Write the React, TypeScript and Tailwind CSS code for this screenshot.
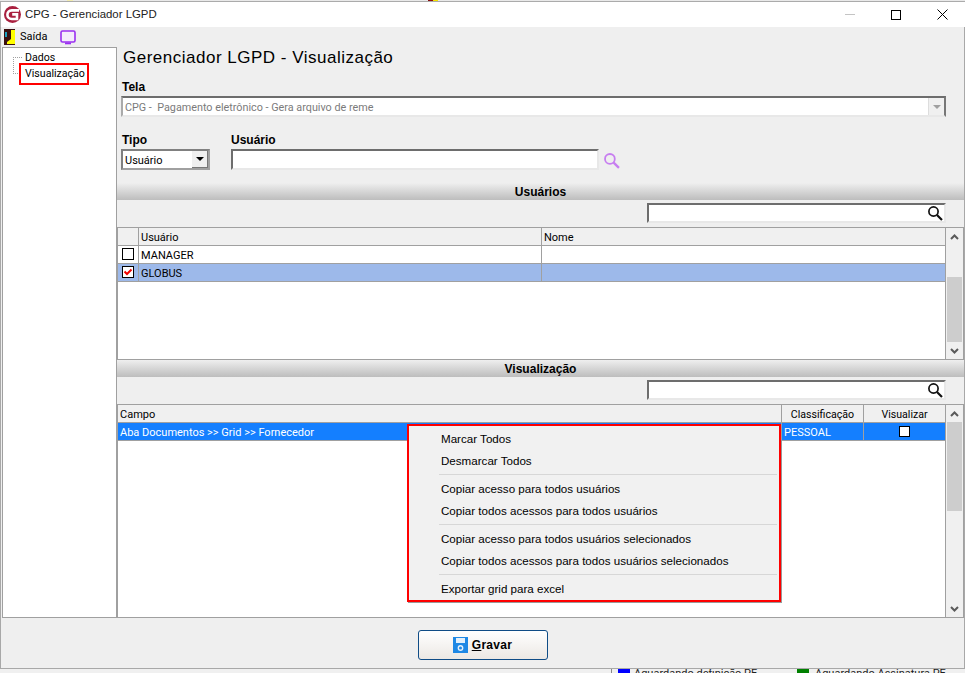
import React from "react";

const FONT = '"Liberation Sans", Arial, sans-serif';
const GRID = '"Roboto", "Liberation Sans", sans-serif';
const inset = "border-t-2 border-l-2 border-t-[#6d6d6d] border-l-[#6d6d6d] border-b-2 border-r-2 border-b-[#e8e8e8] border-r-[#e8e8e8]";

function Lens({ color = "#111", size = 16 }: { color?: string; size?: number }) {
  return (
    <svg width={size} height={size} viewBox="0 0 16 16" fill="none">
      <circle cx="6.5" cy="6.5" r="4.6" stroke={color} strokeWidth="1.7" />
      <path d="M10 10l5 5" stroke={color} strokeWidth="2.2" />
    </svg>
  );
}

function ScrollBar({ thumbTop, thumbH }: { thumbTop: number; thumbH: number }) {
  return (
    <div className="w-[18px] shrink-0 bg-[#f0f0f0] border-l border-[#a0a0a0] flex flex-col">
      <div className="h-[17px] flex items-center justify-center shrink-0">
        <svg width="9" height="6" viewBox="0 0 9 6"><path d="M1 5l3.5-3.5L8 5" stroke="#5a5a5a" strokeWidth="2" fill="none" /></svg>
      </div>
      <div className="flex-1 min-h-0 mx-[1px]">
        <div style={{ marginTop: thumbTop, height: thumbH }} className="bg-[#cdcdcd]" />
      </div>
      <div className="h-[17px] flex items-center justify-center shrink-0">
        <svg width="9" height="6" viewBox="0 0 9 6"><path d="M1 1l3.5 3.5L8 1" stroke="#5a5a5a" strokeWidth="2" fill="none" /></svg>
      </div>
    </div>
  );
}

function SectionBar({ label }: { label: string }) {
  return (
    <div className="h-[17px] flex items-center justify-center bg-gradient-to-b from-[#efefef] to-[#bdbdbd] text-[12px] font-bold text-black leading-none shrink-0">
      {label}
    </div>
  );
}

function SearchRow() {
  return (
    <div className="h-[20px] mt-[3px] flex justify-end pr-[18px] shrink-0">
      <div className={`w-[299px] h-[20px] bg-white ${inset} flex items-center justify-end pr-[1px]`}>
        <Lens />
      </div>
    </div>
  );
}

function MenuItem({ label }: { label: string }) {
  return <div className="h-[22px] pl-[32px] flex items-center text-[11.6px] text-black whitespace-nowrap">{label}</div>;
}

function MenuSep() {
  return <div className="h-[1px] mt-[2px] mb-[3px] ml-[30px] mr-[2px] bg-[#d7d7d7]" />;
}

export default function App() {
  return (
    <div className="w-[965px] h-[673px] relative overflow-hidden bg-[#f0f0f0] flex flex-col" style={{ fontFamily: FONT }}>
      <div className="h-[1px] bg-[#e9e9e9] shrink-0 flex">
        <div className="ml-[67px] w-[6px] bg-[#f2ecb0]" />
        <div className="ml-[355px] w-[5px] bg-[#8a1010]" />
        <div className="w-[5px] bg-[#f4e400]" />
      </div>
      <div className="h-[1px] bg-[#ababab] shrink-0" />
      <div className="h-[25px] bg-white shrink-0 flex items-center pl-[3px] text-[11.4px] text-[#222] border-l border-[#b0b0b0]">
        <svg width="17" height="17" viewBox="0 0 17 17" className="mr-[4px]">
          <circle cx="8.5" cy="8.5" r="8.5" fill="#a9203f" />
          <path d="M15 4.4H7.8C5 4.4 3.4 6.4 3.4 8.7S5 13 7.8 13H13V8.4H8.2" stroke="#fff" strokeWidth="2.6" fill="none" />
        </svg>
        <span>CPG - Gerenciador LGPD</span>
        <div className="ml-auto flex items-center">
          <div className="w-[46px] flex justify-center"><div className="w-[10px] h-[1px] bg-[#c4c4c4]" /></div>
          <div className="w-[46px] flex justify-center"><div className="w-[10px] h-[10px] border border-black" /></div>
          <div className="w-[46px] flex justify-center">
            <svg width="11" height="11" viewBox="0 0 11 11"><path d="M0.5 0.5l10 10M10.5 0.5l-10 10" stroke="#000" strokeWidth="1" /></svg>
          </div>
        </div>
      </div>

      <div className="h-[642px] shrink-0 bg-[#efefef] flex flex-col border-l border-r border-b border-[#a8a8a8]">
        <div className="h-[20px] flex items-center shrink-0 text-[11px] text-black pl-[3px]" style={{ fontFamily: GRID }}>
          <svg width="11" height="16" viewBox="0 0 11 16" className="mr-[5px]">
            <rect width="11" height="16" fill="#3a1010" />
            <rect x="3" y="1" width="8" height="14" fill="#ffff00" />
            <path d="M3 1h4v9l-4 3z" fill="#3a1010" />
            <rect x="1" y="3" width="2" height="5" fill="#19a0c0" />
          </svg>
          <span className="w-[40px]">Saída</span>
          <svg width="16" height="15" viewBox="0 0 16 15">
            <rect x="1" y="1" width="14" height="11" rx="1.5" fill="#f4ecfb" stroke="#9a2ff0" strokeWidth="1.6" />
            <rect x="5" y="12.5" width="6" height="1.8" fill="#9a2ff0" />
          </svg>
        </div>

        <div className="h-[571px] shrink-0 flex">
          <div className="w-[115px] ml-[1px] bg-white border border-[#a0a0a0] shrink-0 relative text-[10.6px] text-black" style={{ fontFamily: GRID }}>
            <div className="absolute left-[10px] top-[9px] h-[17px] border-l border-dotted border-[#a0a0a0]" />
            <div className="absolute left-[10px] top-[9px] w-[9px] border-t border-dotted border-[#a0a0a0]" />
            <div className="absolute left-[10px] top-[25px] w-[7px] border-t border-dotted border-[#a0a0a0]" />
            <div className="absolute left-[22px] top-[3px] leading-[14px]">Dados</div>
            <div className="absolute left-[22px] top-[19px] leading-[14px]">Visualização</div>
            <div className="absolute left-[16px] top-[15px] w-[70px] h-[22px] border-[2px] border-[#ff0000]" />
          </div>

          <div className="flex-1 min-w-0 flex flex-col">
            <div className="h-[21px] pl-[6px] flex items-center text-[17px] text-black tracking-[0.5px] shrink-0">
              Gerenciador LGPD - Visualização
            </div>
            <div className="h-[14px] mt-[12px] pl-[5px] text-[12px] font-bold text-black leading-[14px] shrink-0">Tela</div>
            <div className="ml-[4px] mr-[18px] mt-[2px] h-[21px] bg-white border-t-2 border-l-2 border-t-[#6d6d6d] border-l-[#aaa] border-b-2 border-r-2 border-b-[#e8e8e8] border-r-[#777] flex items-center shrink-0">
              <span className="pl-[2px] pt-[3px] text-[10.8px] text-[#7b7b7b] whitespace-pre" style={{ fontFamily: GRID }}>CPG -  Pagamento eletrônico - Gera arquivo de reme</span>
              <div className="ml-auto w-[16px] h-full bg-[#f0f0f0] border-l border-[#ddd] flex items-center justify-center">
                <svg width="8" height="4" viewBox="0 0 8 4"><path d="M0 0h8L4 4z" fill="#a0a0a0" /></svg>
              </div>
            </div>
            <div className="flex h-[14px] mt-[16px] pl-[5px] shrink-0 text-[12px] font-bold text-black leading-[14px]">
              <div className="w-[109px]">Tipo</div>
              <div>Usuário</div>
            </div>
            <div className="flex mt-[2px] pl-[4px] items-center shrink-0 h-[21px]">
              <div className="w-[89px] h-[21px] bg-white border-t-2 border-l-2 border-t-[#808080] border-l-[#808080] border-b-2 border-r-2 border-b-[#a0a0a0] border-r-[#a0a0a0] flex items-center text-[11px] text-black" style={{ fontFamily: GRID }}>
                <span className="pl-[2px] pt-[3px]">Usuário</span>
                <div className="ml-auto w-[16px] h-[17px] bg-[#efefef] border-r border-b border-[#777] flex items-center justify-center">
                  <svg width="8" height="4" viewBox="0 0 8 4"><path d="M0 0h8L4 4z" fill="#000" /></svg>
                </div>
              </div>
              <div className={`ml-[21px] w-[368px] h-[21px] bg-white ${inset}`} />
              <div className="ml-[4px] mt-[1px]"><Lens color="#c77ef0" size={17} /></div>
            </div>

            <div className="h-[13px] shrink-0" />
            <SectionBar label="Usuários" />
            <SearchRow />
            <div className="h-[133px] mt-[4px] border border-[#a0a0a0] bg-white flex shrink-0 overflow-hidden" style={{ fontFamily: GRID }}>
              <div className="w-[827px] shrink-0 flex flex-col text-[11px] text-black">
                <div className="h-[18px] flex bg-[#f0f0f0] border-b border-[#a0a0a0]">
                  <div className="w-[21px] border-r border-[#a0a0a0]" />
                  <div className="w-[403px] pl-[2px] border-r border-[#a0a0a0] leading-[19px]">Usuário</div>
                  <div className="pl-[2px] leading-[19px]">Nome</div>
                </div>
                <div className="h-[18px] flex border-b border-[#a0a0a0]">
                  <div className="w-[21px] border-r border-[#a0a0a0] pl-[4px] pt-[2px]"><div className="w-[12px] h-[12px] border border-black bg-white" /></div>
                  <div className="w-[403px] pl-[2px] border-r border-[#a0a0a0] leading-[19px]">MANAGER</div>
                </div>
                <div className="h-[18px] flex border-b border-[#a0a0a0] bg-[#9db9ea]">
                  <div className="w-[21px] border-r border-[#a0a0a0] pl-[4px] pt-[2px]">
                    <div className="w-[12px] h-[12px] border border-black bg-white flex items-center justify-center">
                      <svg width="10" height="10" viewBox="0 0 10 10"><path d="M1.5 4.5l2.5 2.5L8.5 2.5" stroke="#f00000" strokeWidth="2" fill="none" /></svg>
                    </div>
                  </div>
                  <div className="w-[403px] pl-[2px] border-r border-[#a0a0a0] leading-[19px]">GLOBUS</div>
                </div>
              </div>
              <ScrollBar thumbTop={32} thumbH={65} />
            </div>

            <SectionBar label="Visualização" />
            <SearchRow />
            <div className="h-[214px] mt-[4px] border border-[#a0a0a0] bg-white flex relative shrink-0" style={{ fontFamily: GRID }}>
              <div className="w-[827px] shrink-0 flex flex-col text-[11px] text-black">
                <div className="h-[18px] flex bg-[#f0f0f0] border-b border-[#a0a0a0]">
                  <div className="w-[664px] pl-[2px] border-r border-[#a0a0a0] leading-[19px]">Campo</div>
                  <div className="w-[82px] border-r border-[#a0a0a0] leading-[19px] text-center text-[10.6px]">Classificação</div>
                  <div className="flex-1 leading-[19px] text-center text-[10.6px]">Visualizar</div>
                </div>
                <div className="h-[18px] flex border-b border-[#a0a0a0] bg-[#147fff] text-white">
                  <div className="w-[664px] pl-[2px] border-r border-[#a0a0a0] leading-[19px]">Aba Documentos &gt;&gt; Grid &gt;&gt; Fornecedor</div>
                  <div className="w-[82px] pl-[2px] border-r border-[#a0a0a0] leading-[19px]">PESSOAL</div>
                  <div className="flex-1 flex items-center justify-center"><div className="w-[11px] h-[11px] border border-black bg-white" /></div>
                </div>
              </div>
              <ScrollBar thumbTop={0} thumbH={89} />
              <div className="absolute left-[289px] top-[19px] w-[374px] h-[178px] bg-[#f1f1f1] border-[2px] border-[#ff0000] shadow-[1px_1px_0_#9a9a9a] pt-[2px]" style={{ fontFamily: FONT }}>
                <MenuItem label="Marcar Todos" />
                <MenuItem label="Desmarcar Todos" />
                <MenuSep />
                <MenuItem label="Copiar acesso para todos usuários" />
                <MenuItem label="Copiar todos acessos para todos usuários" />
                <MenuSep />
                <MenuItem label="Copiar acesso para todos usuários selecionados" />
                <MenuItem label="Copiar todos acessos para todos usuários selecionados" />
                <MenuSep />
                <MenuItem label="Exportar grid para excel" />
              </div>
            </div>
          </div>
        </div>

        <div className="flex-1 min-h-0 flex justify-center pt-[12px]">
          <button className="w-[130px] h-[30px] rounded-[3px] border border-[#0f4c86] bg-gradient-to-b from-white to-[#ece8e4] flex items-center justify-center text-[12px] font-bold text-black tracking-[0.3px]">
            <svg width="15" height="16" viewBox="0 0 15 16" className="mr-[4px]">
              <rect width="15" height="16" fill="#1e88e5" />
              <rect x="3" y="1" width="9" height="5" fill="#e3f0fb" />
              <circle cx="7.5" cy="11" r="2.2" fill="none" stroke="#e3f0fb" strokeWidth="1.4" />
            </svg>
            <span><u>G</u>ravar</span>
          </button>
        </div>
      </div>

      <div className="flex-1 min-h-0 overflow-hidden flex text-[11px] text-[#222] pl-[611px]" style={{ fontFamily: GRID }}>
        <div className="w-[1px] bg-[#888] mr-[6px]" />
        <div className="w-[12px] h-[12px] bg-[#0000ff] shrink-0" />
        <div className="ml-[4px] w-[163px] whitespace-nowrap leading-[12px] mt-[-1px]">Aguardando definição PE</div>
        <div className="w-[12px] h-[12px] bg-[#008000] shrink-0" />
        <div className="ml-[6px] whitespace-nowrap leading-[12px] mt-[-1px]">Aguardando Assinatura PE</div>
      </div>
    </div>
  );
}
